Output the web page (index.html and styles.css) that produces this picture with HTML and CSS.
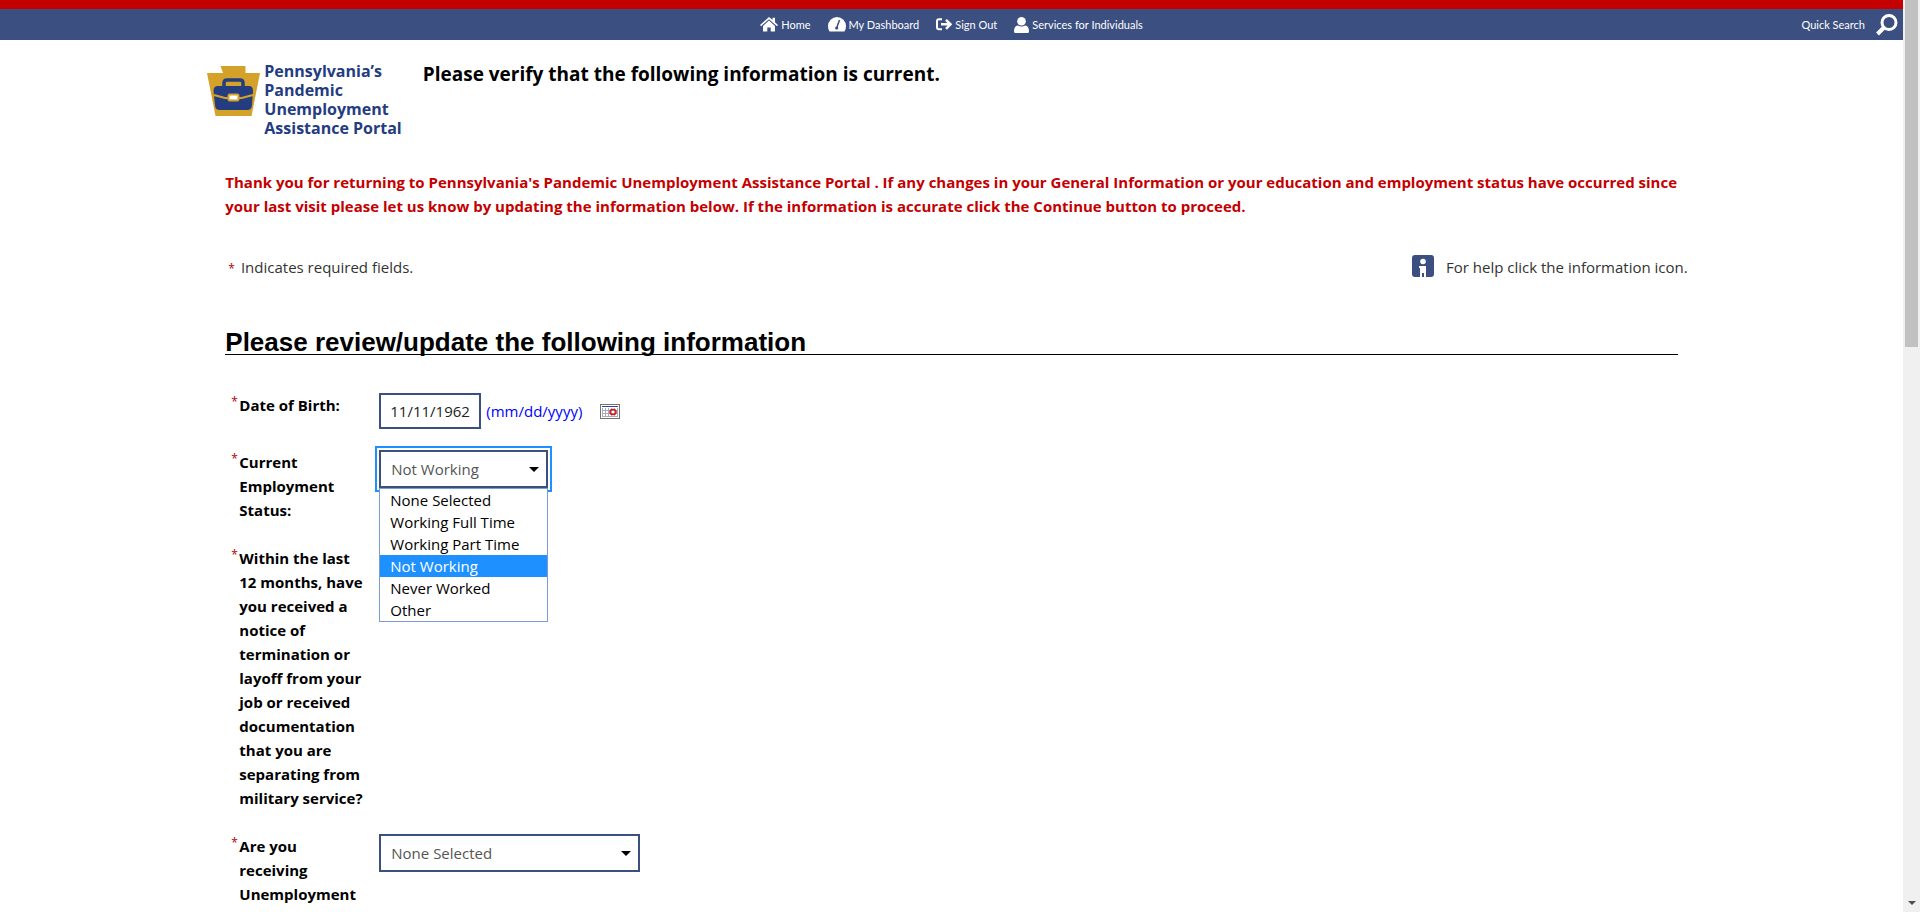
FILE: index.html
```
<!DOCTYPE html>
<html lang="en">
<head>
    <meta charset="UTF-8">
    <meta name="viewport" content="width=device-width, initial-scale=1.0">
    <title>Verify Information</title>
    <link rel="stylesheet" href="styles.css">
</head>
<body>
    <div class="page">
        <header class="topbar">
            <nav class="nav">
                <a href="#">
                    <svg width="18" height="15" viewBox="0 0 18 15"><path fill="#fff" d="M9 0 0 8l1 1.2L9 2.2l8 7L18 8l-3-2.700V.8h-2.500v2.300zM9 3.600 3 8.900V14q0 .6.6.6h3.700v-4h3.400v4h3.700q.6 0 .6-.6V8.900z"/></svg>
                    Home
                </a>
                <a href="#">
                    <svg width="18" height="15" viewBox="0 0 18 15"><path fill="#fff" d="M9 0a9 9 0 0 0-9 9q0 3 1.500 5.400h15Q18 12 18 9a9 9 0 0 0-9-9z"/><path stroke="#3b4f81" stroke-width="1.500" d="M11.500 3 9 10"/><circle cx="8.700" cy="11" r="1.600" fill="#3b4f81"/></svg>
                    My Dashboard
                </a>
                <a href="#">
                    <svg width="16" height="13" viewBox="0 0 16 13"><path fill="none" stroke="#fff" stroke-width="2" d="M6 1.300H3Q1 1.300 1 3.300v6q0 2 2 2h3"/><path fill="none" stroke="#fff" stroke-width="2.500" d="M5 6.300h9M10 1.800l4.500 4.500L10 10.800"/></svg>
                    Sign Out
                </a>
                <a href="#">
                    <svg width="15" height="16" viewBox="0 0 15 16"><circle cx="7.500" cy="4.300" r="4.300" fill="#fff"/><path fill="#fff" d="M0 14.500Q0 9 3.800 8.500q3.700 1.800 7.400 0Q15 9 15 14.500 15 16 13.500 16h-12Q0 16 0 14.500z"/></svg>
                    Services for Individuals
                </a>
            </nav>
            <a class="quick-search" href="#">
                Quick Search
                <svg width="22" height="22" viewBox="0 0 22 22"><circle cx="13" cy="8.500" r="7" fill="none" stroke="#fff" stroke-width="3"/><path stroke="#fff" stroke-width="4" d="M8 13.500 1.500 20"/></svg>
            </a>
        </header>

        <main class="container">
            <div class="masthead">
                <a class="logo" href="#">
                    <svg width="53" height="50" viewBox="0 0 53 50">
                        <path fill="#d4a129" d="M13.500 0h25v7H53l-8.500 43h-36L0 7h16z"/>
                        <path fill="none" stroke="#243c80" stroke-width="3.500" d="M17 21v-4q0-3 3-3h13q3 0 3 3v4"/>
                        <path fill="#243c80" d="M11 20h31q4 0 4 5l-1 14q0 5-5 5H13q-5 0-5-5L6.500 25q0-5 4.500-5z"/>
                        <path fill="none" stroke="#d4a129" stroke-width="2" d="M7 29q19 7 39 0"/>
                        <rect x="21.500" y="28.500" width="10" height="6" rx="1" fill="#fff" stroke="#d4a129" stroke-width="2"/>
                    </svg>
                    <span>Pennsylvania’s<br>Pandemic<br>Unemployment<br>Assistance Portal</span>
                </a>
                <h1>Please verify that the following information is current.</h1>
            </div>

            <p class="notice">Thank you for returning to Pennsylvania's Pandemic Unemployment Assistance Portal . If any changes in your General Information or your education and employment status have occurred since your last visit please let us know by updating the information below. If the information is accurate click the Continue button to proceed.</p>

            <div class="legend">
                <p><span class="star">*</span>Indicates required fields.</p>
                <p class="help">
                    <svg width="22" height="22" viewBox="0 0 22 22"><rect width="22" height="22" rx="3" fill="#3b4f81"/><circle cx="11" cy="6.500" r="2.800" fill="#fff"/><path fill="#fff" d="M7 11h7v11h-2v-4h-2v4H8v-9H7z"/></svg>
                    For help click the information icon.
                </p>
            </div>

            <h2>Please review/update the following information</h2>

            <form class="form">
                <div class="form-row">
                    <span class="star">*</span>
                    <label for="dob">Date of Birth:</label>
                    <div class="field">
                        <input type="text" id="dob" value="11/11/1962">
                        <span class="hint">(mm/dd/yyyy)</span>
                        <button type="button" class="calendar" aria-label="Calendar">
                            <svg width="20" height="15" viewBox="0 0 20 15"><rect x=".5" y=".5" width="19" height="14" fill="#fff" stroke="#77755f"/><path fill="none" stroke="#a9a9bd" d="M2.500 4v9M5.500 4v9M8.500 4v9M11.500 4v9M14.500 4v9M17.500 4v9M2 6.500h16M2 9.500h16M2 12.500h16"/><path fill="#2547b0" d="M2 2h16v1H2z"/><ellipse cx="13" cy="8" rx="3" ry="2.500" fill="none" stroke="#d81818" stroke-width="1.500"/></svg>
                        </button>
                    </div>
                </div>
                <div class="form-row">
                    <span class="star">*</span>
                    <label for="employment">Current Employment Status:</label>
                    <div class="field">
                        <div class="select open">
                            <select id="employment">
                                <option>None Selected</option>
                                <option>Working Full Time</option>
                                <option>Working Part Time</option>
                                <option selected>Not Working</option>
                                <option>Never Worked</option>
                                <option>Other</option>
                            </select>
                            <ul class="options">
                                <li>None Selected</li>
                                <li>Working Full Time</li>
                                <li>Working Part Time</li>
                                <li class="active">Not Working</li>
                                <li>Never Worked</li>
                                <li>Other</li>
                            </ul>
                        </div>
                    </div>
                </div>
                <div class="form-row">
                    <span class="star">*</span>
                    <p class="label">Within the last 12 months, have you received a notice of termination or layoff from your job or received documentation that you are separating from military service?</p>
                </div>
                <div class="form-row">
                    <span class="star">*</span>
                    <label for="unemployment">Are you receiving Unemployment</label>
                    <div class="field">
                        <div class="select wide">
                            <select id="unemployment">
                                <option>None Selected</option>
                            </select>
                        </div>
                    </div>
                </div>
            </form>
        </main>
    </div>
    <div class="scrollbar">
        <div class="thumb"></div>
        <div class="arrow"></div>
    </div>
</body>
</html>
```
FILE: styles.css
```
* {
    box-sizing: border-box;
}

body {
    display: flex;
    height: 100vh;
    margin: 0;
    overflow: hidden;
    background-color: #fff;
    color: #000;
    font-family: "Open Sans", "Noto Sans", sans-serif;
    font-size: 15px;
    line-height: 24px;
}

p, h1, h2, ul {
    margin: 0;
    padding: 0;
}

svg {
    display: block;
    flex: none;
}

.page {
    flex: 1;
    overflow: hidden;
}

/* top navigation */
.topbar {
    display: grid;
    grid-template-columns: 1fr auto 1fr;
    align-items: center;
    height: 40px;
    border-top: 9px solid #c40000;
    background-color: #3b4f81;
    font-family: Lato, "Open Sans", sans-serif;
    font-size: 11px;
}

.topbar a {
    display: flex;
    align-items: center;
    gap: 3px;
    color: #fff;
    text-decoration: none;
}

.nav {
    display: flex;
    grid-column: 2;
    gap: 17px;
}

.topbar .quick-search {
    justify-self: end;
    gap: 11px;
    padding-right: 5px;
}

.container {
    width: 80%;
    margin: 0 auto;
    padding: 20px 35px 0;
}

.masthead {
    display: flex;
    height: 80px;
    margin-left: -18px;
    gap: 21px;
}

.logo {
    display: flex;
    gap: 4px;
    padding-top: 2px;
    color: #243c80;
    font-size: 16px;
    font-weight: 700;
    line-height: 19px;
    text-decoration: none;
}

.logo svg {
    margin-top: 4px;
}

h1 {
    padding-top: 2px;
    font-size: 19px;
    font-weight: 700;
    line-height: 24px;
}

.notice {
    margin-top: 30px;
    color: #c40000;
    font-weight: 700;
}

.star {
    color: #b00000;
    font-size: 12px;
}

.legend {
    display: flex;
    justify-content: space-between;
    margin: 37px -10px 0 3px;
    color: #333;
}

.legend .star {
    margin-right: 6px;
}

.help {
    display: flex;
    gap: 12px;
}

h2 {
    margin-top: 49px;
    border-bottom: 1px solid #000;
    font-family: "Liberation Sans", Arial, sans-serif;
    font-size: 26px;
    line-height: 24px;
}

.form {
    display: flex;
    flex-direction: column;
    gap: 21px;
    margin-top: 38px;
    padding-left: 6px;
}

.form-row {
    display: flex;
}

.form-row .star {
    width: 8px;
    line-height: 18px;
}

label, .label {
    width: 127px;
    padding-bottom: 3px;
    font-weight: 700;
}

.field {
    display: flex;
    align-items: center;
    align-self: flex-start;
    margin-left: 13px;
}

input, select {
    height: 36px;
    border: 2px solid #3b4f81;
    background-color: #fff;
    color: #222;
    font: inherit;
}

input {
    width: 102px;
    padding: 0 9px;
}

.hint {
    margin-left: 5px;
    color: #0000ff;
}

.calendar {
    margin-left: 18px;
    padding: 0;
    border: none;
    background: none;
    cursor: pointer;
}

/* drop-downs */
.select {
    position: relative;
    width: 169px;
}

.select.wide {
    width: 261px;
}

.select::after {
    content: "";
    position: absolute;
    top: 17px;
    right: 9px;
    border: 5px solid transparent;
    border-top-color: #000;
    border-bottom: none;
}

select {
    display: block;
    width: 100%;
    height: 38px;
    padding: 0 10px;
    color: #555;
    appearance: none;
}

.select.open select {
    outline: 2px solid #1e90ff;
    outline-offset: 2px;
}

.options {
    position: absolute;
    top: 100%;
    left: 0;
    z-index: 1;
    width: 100%;
    border: 1px solid #7a9cd3;
    background-color: #fff;
    line-height: 22px;
    list-style: none;
}

.options li {
    padding-left: 10px;
}

.options .active {
    background-color: #1e90ff;
    color: #fff;
}

/* window scroll bar */
.scrollbar {
    display: flex;
    flex-direction: column;
    align-items: center;
    justify-content: space-between;
    width: 17px;
    padding-bottom: 7px;
    background-color: #f0f0f0;
}

.thumb {
    width: 13px;
    height: 38vh;
    background-color: #c1c1c1;
}

.arrow {
    border: 4px solid transparent;
    border-top-color: #505050;
    border-bottom: none;
}
```
